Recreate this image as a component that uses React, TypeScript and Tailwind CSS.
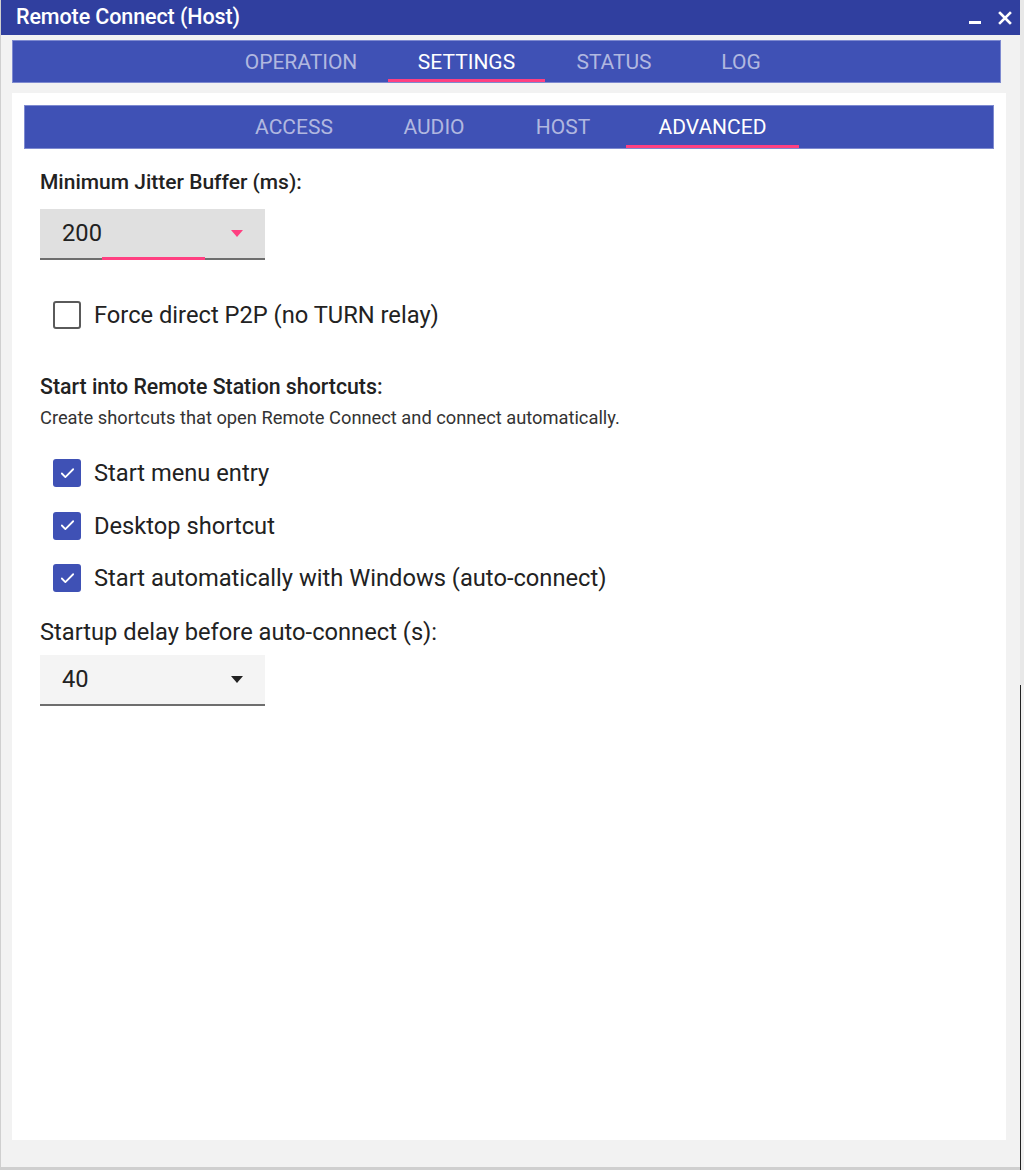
import { Check } from "lucide-react";

function Tab({ label, active, w }: { label: string; active?: boolean; w: string }) {
  return (
    <div className={`relative flex h-full items-center justify-center pt-[2px] ${w}`}>
      <span className={active ? "text-white" : "text-white/60"}>{label}</span>
      {active && <span className="absolute bottom-0 left-0 right-0 h-[3px] bg-[#ff4081]" />}
    </div>
  );
}

function Box({ checked }: { checked?: boolean }) {
  return checked ? (
    <div className="flex h-[28px] w-[28px] items-center justify-center rounded-[3px] bg-[#3f51b5]">
      <Check className="h-[17px] w-[17px] text-white" strokeWidth={2.5} />
    </div>
  ) : (
    <div className="h-[28px] w-[28px] rounded-[3px] border-2 border-[#5a5a5a] bg-white" />
  );
}

function Option({ label, checked }: { label: string; checked?: boolean }) {
  return (
    <div className="flex h-[28px] items-center gap-[13px] pl-[13px]">
      <Box checked={checked} />
      <span className="text-[23.7px] leading-[28px] text-[#222]">{label}</span>
    </div>
  );
}

export default function App() {
  return (
    <div className="flex h-[1170px] w-[1024px] font-['Roboto',sans-serif]">
      <div className="flex w-[1020px] flex-col border-l border-b-[3px] border-[#cfcfcf] bg-[#f2f2f2]">
        {/* Title bar */}
        <div className="flex h-[35px] shrink-0 items-center justify-between bg-[#303f9f] pl-[15px] pr-[8px] text-white">
          <span className="text-[21.5px] font-medium tracking-[-0.1px]">Remote Connect (Host)</span>
          <div className="flex items-center gap-[17px]">
            <span className="mt-[10px] block h-[3px] w-[12px] bg-white" />
            <svg width="14" height="14" viewBox="0 0 14 14" className="mt-[1px]">
              <path d="M2 2 L12 12 M12 2 L2 12" stroke="white" strokeWidth="2.6" strokeLinecap="square" />
            </svg>
          </div>
        </div>

        <div className="flex flex-1 flex-col px-[11px] pb-[27px] pt-[5px]">
          {/* Main tabs */}
          <div className="mr-[8px] flex h-[43px] shrink-0 items-stretch justify-center border border-[#7e8ad0] bg-[#3f51b5] text-[21px]">
            <Tab label="OPERATION" w="w-[174px]" />
            <Tab label="SETTINGS" active w="w-[157px]" />
            <Tab label="STATUS" w="w-[138px]" />
            <Tab label="LOG" w="w-[116px]" />
          </div>

          {/* Panel */}
          <div className="mt-[10px] mr-[3px] flex flex-1 flex-col bg-white px-[12px] pt-[12px]">
            <div className="flex h-[44px] shrink-0 items-stretch justify-center border border-[#7e8ad0] bg-[#3f51b5] pl-[1px] text-[21px]">
              <Tab label="ACCESS" w="w-[148px]" />
              <Tab label="AUDIO" w="w-[132px]" />
              <Tab label="HOST" w="w-[126px]" />
              <Tab label="ADVANCED" active w="w-[173px]" />
            </div>

            <div className="flex flex-col pl-[16px]">
              <div className="mt-[21px] text-[21px] font-medium leading-[24px] text-[#222]">Minimum Jitter Buffer (ms):</div>

              <div className="relative mt-[15px] flex h-[51px] w-[225px] items-center justify-between border-b-2 border-[#6e6e6e] bg-[#e0e0e0] pl-[22px] pr-[22px]">
                <span className="text-[23.7px] text-[#222]">200</span>
                <svg width="12" height="7" viewBox="0 0 12 7">
                  <path d="M0 0 H12 L6 7 Z" fill="#ff4081" />
                </svg>
                <span className="absolute -bottom-[2px] left-[62px] h-[3px] w-[103px] bg-[#ff4081]" />
              </div>

              <div className="mt-[41px]">
                <Option label="Force direct P2P (no TURN relay)" />
              </div>

              <div className="mt-[46px] text-[21.3px] font-medium leading-[24px] text-[#222]">Start into Remote Station shortcuts:</div>
              <div className="mt-[8px] text-[18.3px] leading-[22px] text-[#333]">
                Create shortcuts that open Remote Connect and connect automatically.
              </div>

              <div className="mt-[30px] flex flex-col gap-[24.5px]">
                <Option label="Start menu entry" checked />
                <Option label="Desktop shortcut" checked />
                <Option label="Start automatically with Windows (auto-connect)" checked />
              </div>

              <div className="mt-[25px] text-[23.7px] leading-[30px] text-[#222]">Startup delay before auto-connect (s):</div>

              <div className="mt-[8px] flex h-[51px] w-[225px] items-center justify-between border-b-2 border-[#6e6e6e] bg-[#f4f4f4] pl-[22px] pr-[22px]">
                <span className="text-[23.7px] text-[#222]">40</span>
                <svg width="12" height="7" viewBox="0 0 12 7">
                  <path d="M0 0 H12 L6 7 Z" fill="#222" />
                </svg>
              </div>
            </div>
          </div>
        </div>
      </div>
      <div className="flex w-[4px] flex-col bg-[#e8e8e8]">
        <div className="h-[685px]" />
        <div className="flex-1 border-l border-[#222] bg-[#f0f0f0]" />
      </div>
    </div>
  );
}
